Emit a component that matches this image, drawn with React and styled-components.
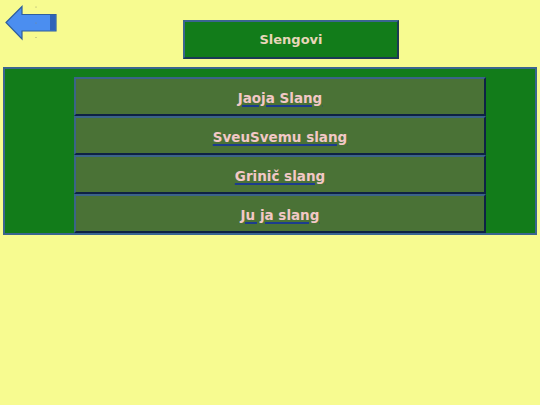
import React from "react";
import styled, { createGlobalStyle } from "styled-components";

const GlobalStyle = createGlobalStyle`
  html, body {
    margin: 0;
    padding: 0;
    background: #f7fb90;
  }
  body {
    font-family: "DejaVu Sans", Verdana, sans-serif;
  }
`;

const slangs = ["Jaoja Slang", "SveuSvemu slang", "Grinič slang", "Ju ja slang"];

const Page = styled.div`
  width: 540px;
  height: 405px;
  background: #f7fb90;
  display: flex;
  flex-direction: column;
`;

const TopBar = styled.div`
  display: flex;
  align-items: flex-start;
  height: 67px;
`;

const BackButton = styled.button`
  all: unset;
  cursor: pointer;
  display: block;
  width: 60px;
  height: 44px;
`;

const Title = styled.div`
  margin: 20px 0 0 123px;
  width: 216px;
  height: 39px;
  box-sizing: border-box;
  background: #127c1a;
  border: 2px solid #3a6590;
  border-right-color: #1b3a55;
  border-bottom-color: #1b3a55;
  display: flex;
  align-items: center;
  justify-content: center;
  color: #e8d6b8;
  font-weight: bold;
  font-size: 13px;
`;

const Panel = styled.div`
  margin: 0 3px;
  background: #127c1a;
  border: 2px solid #3a6590;
  padding: 8px 49px 0 69px;
  display: flex;
  flex-direction: column;
`;

const Row = styled.a`
  display: flex;
  align-items: center;
  justify-content: center;
  height: 39px;
  box-sizing: border-box;
  padding-top: 2px;
  background: #4a7236;
  border-style: solid;
  border-width: 2px;
  border-color: #3b6488 #0e2244 #0e2244 #3b6488;
  color: #f2c8c6;
  font-weight: bold;
  font-size: 13.5px;
  text-decoration: underline;
  text-decoration-color: #1c3c8e;
  text-decoration-thickness: 2px;
  text-underline-offset: 2px;
  cursor: pointer;
`;

const BackArrow = () => (
  <svg width="60" height="44" viewBox="0 0 60 44">
    <path
      d="M6 22.5 L22 6.5 L22 14.5 L56 14.5 L56 31 L22 31 L22 39 Z"
      fill="#4b8ef0"
      stroke="#2f5f9e"
      strokeWidth="1.2"
      strokeLinejoin="miter"
    />
    <rect x="50" y="15" width="5.5" height="15.5" fill="#2e63b8" />
    <circle cx="36" cy="7" r="0.5" fill="#8a8a70" />
    <circle cx="36" cy="23" r="0.5" fill="#8a8a70" />
    <circle cx="36" cy="37.5" r="0.5" fill="#8a8a70" />
  </svg>
);

export default function App() {
  return (
    <>
      <GlobalStyle />
      <Page>
        <TopBar>
          <BackButton aria-label="Nazad">
            <BackArrow />
          </BackButton>
          <Title>Slengovi</Title>
        </TopBar>
        <Panel>
          {slangs.map((s) => (
            <Row key={s}>{s}</Row>
          ))}
        </Panel>
      </Page>
    </>
  );
}
